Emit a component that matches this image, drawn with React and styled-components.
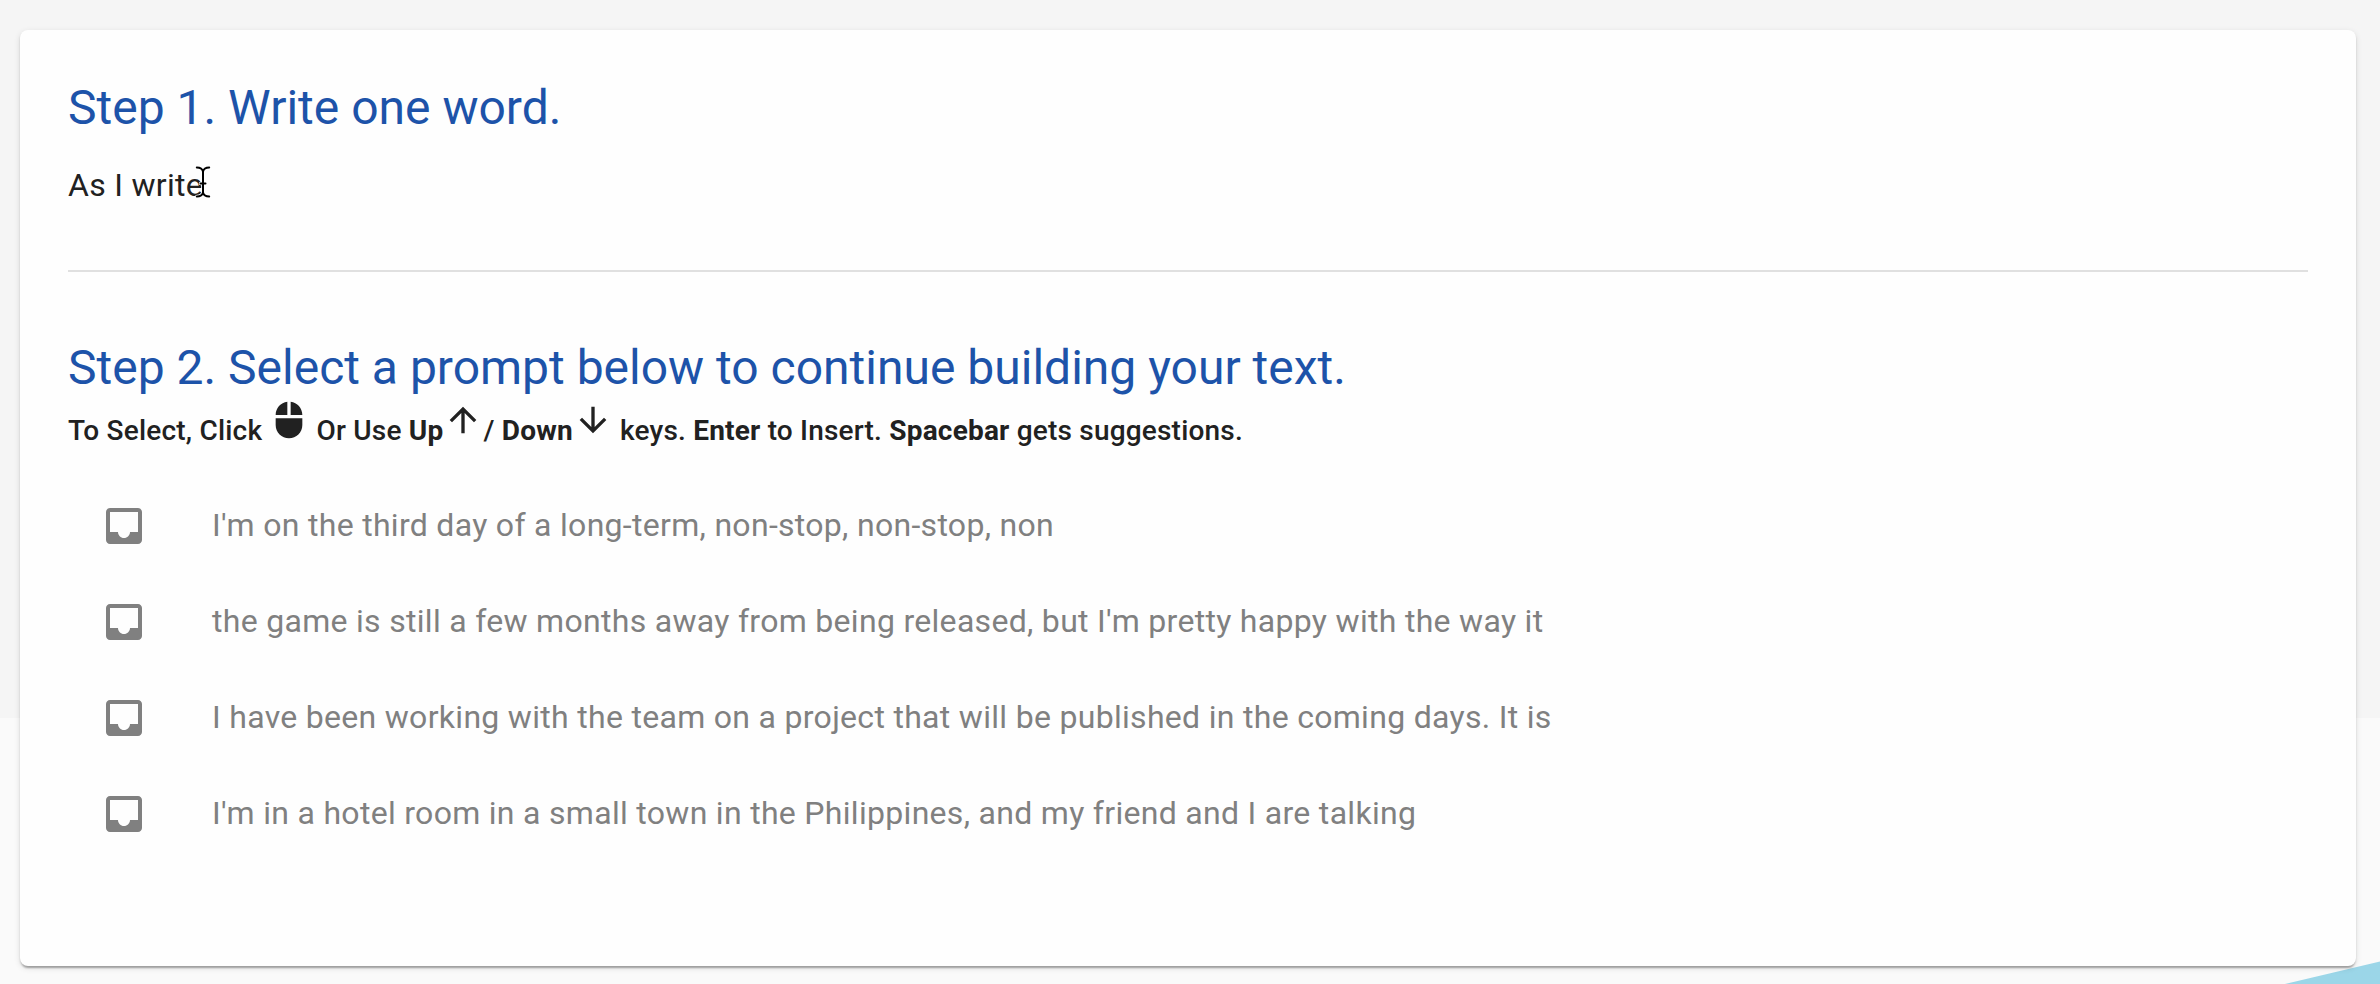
import React from "react";
import styled, { createGlobalStyle } from "styled-components";

const GlobalStyle = createGlobalStyle`
  body {
    margin: 0;
    background: #fafafa;
    font-family: Roboto, "Liberation Sans", sans-serif;
    color: #212121;
  }
`;

const Page = styled.main`
  position: relative;
  box-sizing: border-box;
  height: 984px;
  padding: 30px 24px 18px 20px;
  overflow: hidden;
  background: linear-gradient(#f5f5f5 718px, #fafafa 718px);
`;

const Wave = styled.svg`
  position: absolute;
  right: 0;
  bottom: 0;
  width: 95px;
  height: 23px;
  fill: #9bd6e8;
`;

const Card = styled.section`
  position: relative;
  box-sizing: border-box;
  height: 936px;
  padding: 46px 48px;
  background: #fefefe;
  border-radius: 8px;
  box-shadow: 0 4px 2px -2px rgba(0, 0, 0, 0.2), 0 2px 2px rgba(0, 0, 0, 0.14),
    0 2px 6px rgba(0, 0, 0, 0.12);
`;

const Heading = styled.h2`
  margin: 0;
  font-size: 48px;
  line-height: 64px;
  font-weight: 400;
  color: #1d53a9;
`;

const Draft = styled.p`
  position: relative;
  margin: 21px 0 0;
  font-size: 32px;
  line-height: 48px;
  letter-spacing: 0.3px;
`;

const TextCursor = styled.svg`
  position: absolute;
  left: 127px;
  top: 5px;
  width: 16px;
  height: 32px;
`;

const Divider = styled.hr`
  height: 2px;
  margin: 61px 0 64px;
  border: 0;
  background: #e0e0e0;
`;

const Hint = styled.p`
  height: 48px;
  margin: 0;
  font-size: 28px;
  line-height: 44px;
  font-weight: 500;
  letter-spacing: 0.2px;
  white-space: nowrap;

  b {
    font-weight: 700;
  }
`;

const KeyIcon = styled.svg`
  width: 40px;
  height: 40px;
  fill: currentColor;
`;

const PromptList = styled.ul`
  margin: 30px 0 0;
  padding: 0;
  list-style: none;
`;

const Prompt = styled.li`
  display: flex;
  align-items: center;
  gap: 64px;
  height: 96px;
  padding-left: 32px;
  color: #808080;
`;

const PromptIcon = styled.svg`
  width: 48px;
  height: 48px;
  fill: currentColor;
`;

const PromptText = styled.span`
  padding-bottom: 2px;
  font-size: 32px;
  line-height: 48px;
  letter-spacing: 0.3px;
  white-space: nowrap;
`;

const beam = "M1.800 1.500q5.200 0 6.200 4 1-4 6.200-4M8 5.500v21M1.800 30.500q5.200 0 6.200-4 1 4 6.200 4M5.500 17.500h5";

const prompts = [
  "I'm on the third day of a long-term, non-stop, non-stop, non",
  "the game is still a few months away from being released, but I'm pretty happy with the way it",
  "I have been working with the team on a project that will be published in the coming days. It is",
  "I'm in a hotel room in a small town in the Philippines, and my friend and I are talking",
];

export default function App() {
  return (
    <Page>
      <GlobalStyle />
      <Wave viewBox="0 0 95 23" preserveAspectRatio="none">
        <path d="M0 23 95 .5v22.500z" />
      </Wave>
      <Card>
        <Heading>Step 1. Write one word.</Heading>
        <Draft>
          As I write
          <TextCursor viewBox="0 0 16 32" fill="none" strokeLinecap="round">
            <path d={beam} stroke="#fff" strokeWidth="3.500" />
            <path d={beam} stroke="#000" strokeWidth="2" />
          </TextCursor>
        </Draft>
        <Divider />
        <Heading>Step 2. Select a prompt below to continue building your text.</Heading>
        <Hint>
          To Select, Click{" "}
          <KeyIcon viewBox="0 0 24 24">
            <path d="M13 1.070V9h7c0-4.080-3.050-7.440-7-7.930zM4 15c0 4.420 3.580 8 8 8s8-3.580 8-8v-4H4v4zm7-13.930C7.050 1.560 4 4.920 4 9h7V1.070z" />
          </KeyIcon>{" "}
          Or Use <b>Up</b>
          <KeyIcon viewBox="0 0 24 24">
            <path d="M4 12l1.410 1.410L11 7.830V20h2V7.830l5.580 5.590L20 12l-8-8-8 8z" />
          </KeyIcon>
          / <b>Down</b>
          <KeyIcon viewBox="0 0 24 24">
            <path d="M20 12l-1.410-1.410L13 16.170V4h-2v12.170l-5.580-5.590L4 12l8 8 8-8z" />
          </KeyIcon>{" "}
          keys. <b>Enter</b> to Insert. <b>Spacebar</b> gets suggestions.
        </Hint>
        <PromptList>
          {prompts.map((text) => (
            <Prompt key={text}>
              <PromptIcon viewBox="0 0 24 24">
                <path d="M19 3H5c-1.100 0-2 .9-2 2v14c0 1.100.9 2 2 2h14c1.100 0 2-.9 2-2V5c0-1.100-.9-2-2-2zm0 12h-4c0 1.660-1.350 3-3 3s-3-1.340-3-3H5V5h14v10z" />
              </PromptIcon>
              <PromptText>{text}</PromptText>
            </Prompt>
          ))}
        </PromptList>
      </Card>
    </Page>
  );
}
